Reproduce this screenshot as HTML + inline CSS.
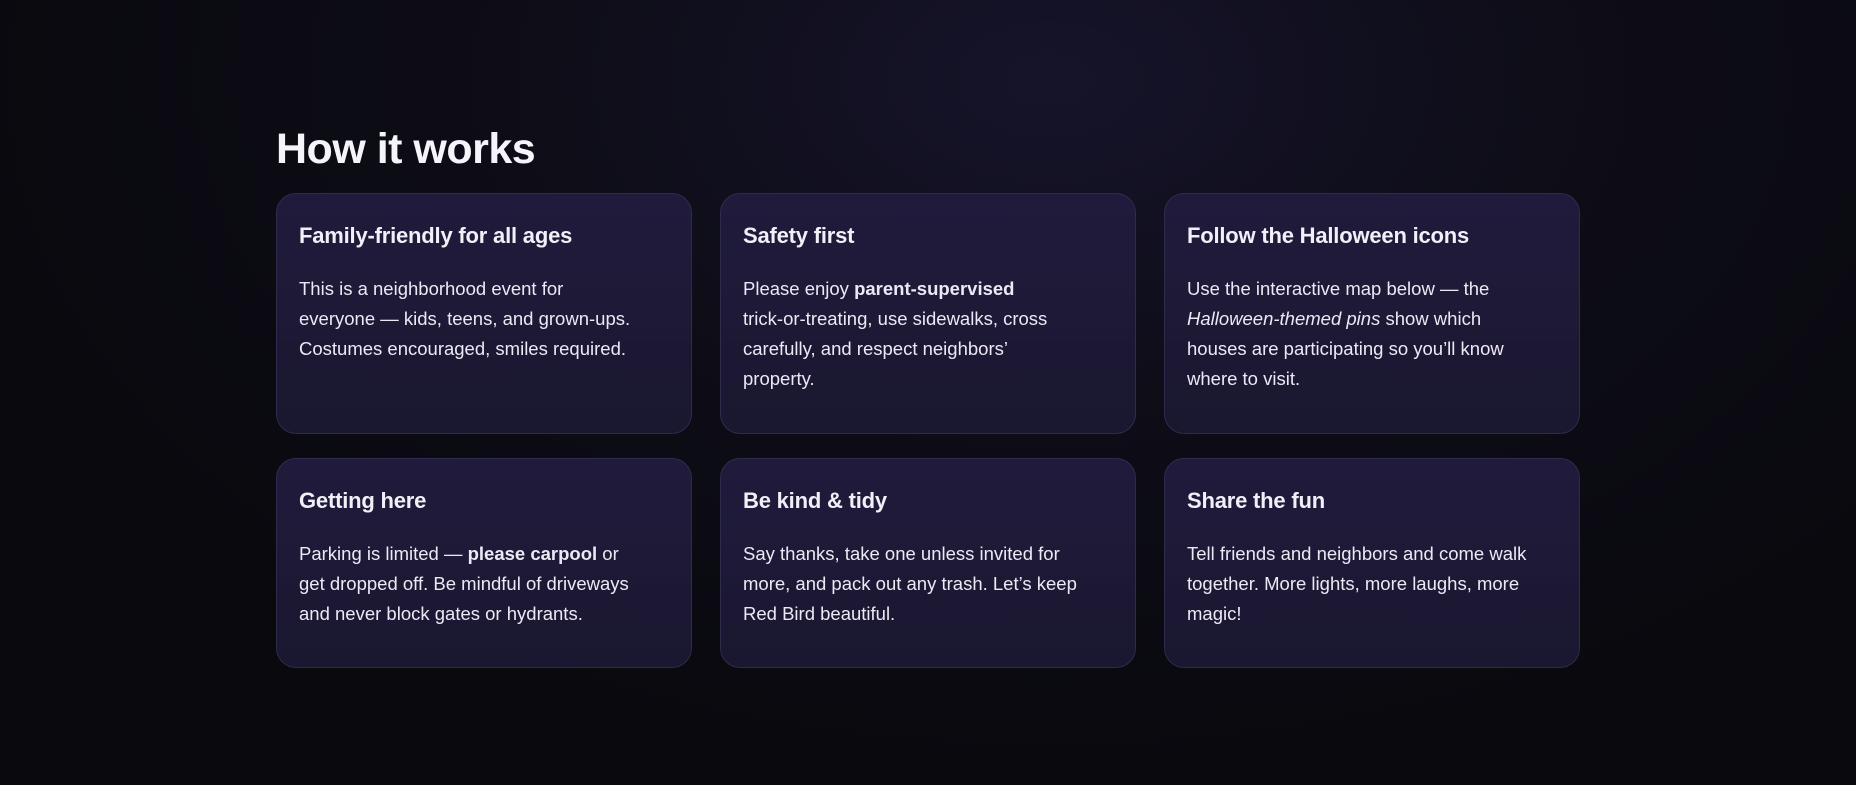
<!DOCTYPE html>
<html><head><meta charset="utf-8">
<style>
html,body{margin:0;padding:0}
body{width:1856px;height:785px;overflow:hidden;background:radial-gradient(ellipse 1100px 700px at 1050px 80px,#16142a 0%,#0e0d18 45%,#09090e 100%);font-family:"Liberation Sans",sans-serif;color:#f1eff8;position:relative}
h1{position:absolute;left:276px;top:124px;margin:0;font-size:43px;line-height:50px;font-weight:700;letter-spacing:-0.5px;color:#f6f4fb}
.card{position:absolute;width:416px;box-sizing:border-box;border:1px solid #2f2b4c;border-radius:20px;background:linear-gradient(180deg,#201b3c 0%,#1a1730 100%);padding:27px 22px 0 22px}
.card h3{margin:0;font-size:22px;line-height:30px;font-weight:700;white-space:nowrap;letter-spacing:-0.2px}
.card p{margin:23px 0 0;font-size:18.5px;line-height:30px;white-space:nowrap;color:#ece9f5}
.r1{top:193px;height:241px}
.r2{top:458px;height:210px}
.c1{left:276px}.c2{left:720px}.c3{left:1164px}
</style></head><body>
<h1>How it works</h1>
<div class="card r1 c1"><h3>Family-friendly for all ages</h3><p>This is a neighborhood event for<br>everyone — kids, teens, and grown-ups.<br>Costumes encouraged, smiles required.</p></div>
<div class="card r1 c2"><h3>Safety first</h3><p>Please enjoy <b>parent-supervised</b><br>trick-or-treating, use sidewalks, cross<br>carefully, and respect neighbors’<br>property.</p></div>
<div class="card r1 c3"><h3>Follow the Halloween icons</h3><p>Use the interactive map below — the<br><i>Halloween-themed pins</i> show which<br>houses are participating so you’ll know<br>where to visit.</p></div>
<div class="card r2 c1"><h3>Getting here</h3><p>Parking is limited — <b>please carpool</b> or<br>get dropped off. Be mindful of driveways<br>and never block gates or hydrants.</p></div>
<div class="card r2 c2"><h3>Be kind &amp; tidy</h3><p>Say thanks, take one unless invited for<br>more, and pack out any trash. Let’s keep<br>Red Bird beautiful.</p></div>
<div class="card r2 c3"><h3>Share the fun</h3><p>Tell friends and neighbors and come walk<br>together. More lights, more laughs, more<br>magic!</p></div>
</body></html>
